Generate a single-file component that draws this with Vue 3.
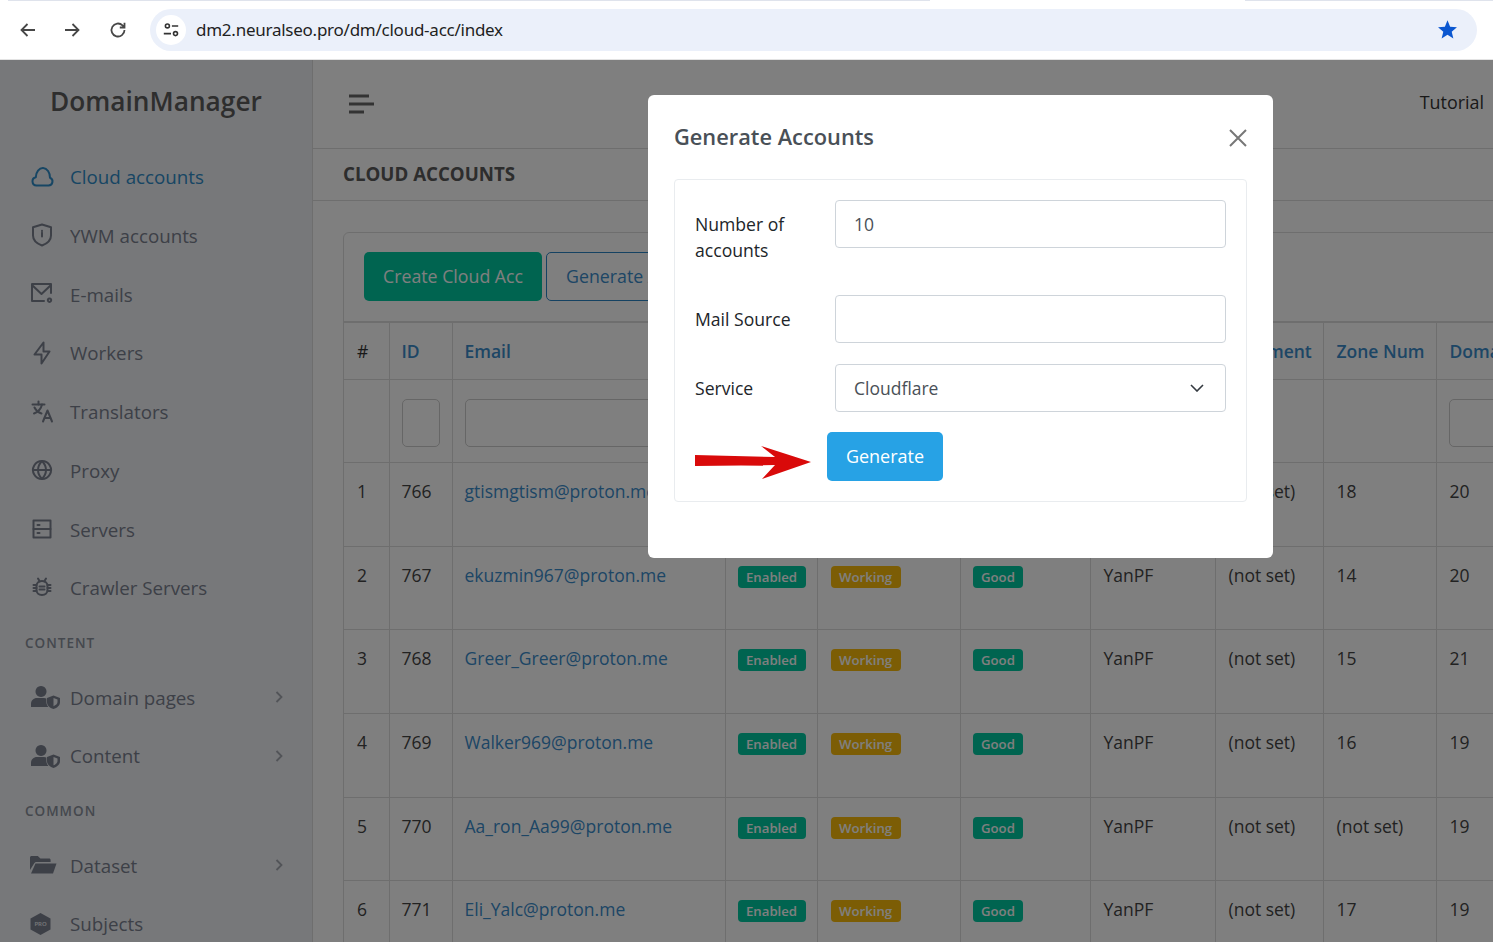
<script setup>
const userShield = ['M11 1a5.500 5.500 0 1 0 .01 0z', 'M1 22v-3c0-3.600 2.600-6 6-6h7c.9 0 1.700.2 2.400.5V17c0 1.900.8 3.600 2.100 5z', 'M23.500 10.500l6.500 2.400v4.300c0 3-2.600 5.600-6.500 6.800-3.900-1.200-6.500-3.800-6.500-6.800v-4.300zM23.500 13v8.300c2.400-1 4-2.400 4-4.200v-2.600z']

const nav = [
  { label: 'Cloud accounts', active: true, d: ['M6.500 20.500h12a4 4 0 0 0 1.500-7.700A7.100 9.500 0 0 0 5.800 12.200 4.200 4.200 0 0 0 6.500 20.500z'] },
  { label: 'YWM accounts', d: ['M12 1.500l9 2.800v8.200c0 4.600-3.600 8-9 10-5.400-2-9-5.400-9-10V4.300z', 'M12 9.500v4', 'M12 7.800v.2'] },
  { label: 'E-mails', d: ['M21 11V2H2v17h12', 'M2 3l9.500 9L21 3', 'M19.500 16.500a1.700 1.700 0 1 0 .01 0z'] },
  { label: 'Workers', d: ['M13.500 1.500v9h6l-8 12v-9H4.500z'] },
  { label: 'Translators', d: ['M2.500 4.500h12', 'M8.500 1.500v3', 'M12 4.500c-1 4.500-4 7.500-8 9', 'M4.500 7.500c1.500 3 4 5 7 6', 'M13 21.500l4.500-11 4.500 11', 'M14.800 18h5.400'] },
  { label: 'Proxy', d: ['M12 3a9 9 0 1 0 .01 0z', 'M3 12h18', 'M12 3c-2.700 2.800-4 5.800-4 9s1.300 6.200 4 9c2.700-2.800 4-5.800 4-9s-1.300-6.200-4-9z'] },
  { label: 'Servers', d: ['M3.500 3.500h17v17h-17z', 'M3.500 12h17', 'M7.500 8h2', 'M7.500 16h2'] },
  { label: 'Crawler Servers', d: ['M12 5c-3.500 0-5.500 2.200-5.500 5v4c0 2.800 2 5 5.500 5s5.500-2.200 5.500-5v-4c0-2.800-2-5-5.500-5z', 'M9.500 10.500h5', 'M9.500 13.500h5', 'M8 2.500l1.800 3', 'M16 2.500l-1.800 3', 'M3.500 9h3', 'M3.500 12h3', 'M3.500 15h3', 'M17.500 9h3', 'M17.500 12h3', 'M17.500 15h3'] },
  { section: 'CONTENT' },
  { label: 'Domain pages', more: true, solid: true, d: userShield },
  { label: 'Content', more: true, solid: true, d: userShield },
  { section: 'COMMON' },
  { label: 'Dataset', more: true, solid: true, d: ['M0 17V4.500C0 3.600.7 3 1.500 3h6.300l2.600 2.600h8.700c.9 0 1.500.6 1.500 1.500V9H6.500c-1.100 0-2 .6-2.400 1.500z', 'M5.500 10.500H26.500l-3.500 10H1z'] },
  { label: 'Subjects', hex: true, solid: true, d: ['M10.500 1l10 5.500v11l-10 5.500-10-5.500v-11z'] }
]

const rows = [
  { n: 1, id: 766, email: 'gtismgtism@proton.me', zone: '18', dom: 20 },
  { n: 2, id: 767, email: 'ekuzmin967@proton.me', zone: '14', dom: 20 },
  { n: 3, id: 768, email: 'Greer_Greer@proton.me', zone: '15', dom: 21 },
  { n: 4, id: 769, email: 'Walker969@proton.me', zone: '16', dom: 19 },
  { n: 5, id: 770, email: 'Aa_ron_Aa99@proton.me', zone: '(not set)', dom: 19 },
  { n: 6, id: 771, email: 'Eli_Yalc@proton.me', zone: '17', dom: 19 }
]
</script>

<template>
  <div class="screen">
    <header class="chrome">
      <div class="tabline"></div>
      <svg class="nav-ic" viewBox="0 0 20 20"><path d="M17 10H4M9.500 4L3.500 10l6 6" /></svg>
      <svg class="nav-ic" viewBox="0 0 20 20"><path d="M2 10h13M9.500 4l6 6-6 6" /></svg>
      <svg class="nav-ic" viewBox="0 0 20 20"><path d="M16.500 10a6.500 6.500 0 1 1-2-4.700L16.500 7.200M16.500 2.800v4.700h-4.700" /></svg>
      <div class="omnibox">
        <span class="site-btn">
          <svg viewBox="0 0 20 20"><circle cx="6" cy="5.500" r="2.200" /><path d="M11 5.500h7M2 14h8" /><circle cx="15" cy="14" r="2.200" /></svg>
        </span>
        <span class="url">dm2.neuralseo.pro/dm/cloud-acc/index</span>
        <svg class="star" viewBox="0 0 24 24"><path d="M12 1.500l3 7.300 7.800.6-6 5.100 1.900 7.700L12 18.100l-6.700 4.100 1.900-7.700-6-5.100 7.800-.6z" /></svg>
      </div>
    </header>

    <div class="app">
      <aside class="sidebar">
        <div class="brand">DomainManager</div>
        <template v-for="item in nav" :key="item.label || item.section">
          <div v-if="item.section" class="section">{{ item.section }}</div>
          <a v-else class="nav-item" :class="{ active: item.active }">
            <svg class="item-ic" :class="{ solid: item.solid }" viewBox="0 0 24 24">
              <path v-for="p in item.d" :key="p" :d="p" fill-rule="evenodd" />
              <text v-if="item.hex" class="pro" x="10.500" y="14" text-anchor="middle">PRO</text>
            </svg>
            <span class="item-label">{{ item.label }}</span>
            <svg v-if="item.more" class="more" viewBox="0 0 10 14"><path d="M2.500 2l5 5-5 5" /></svg>
          </a>
        </template>
      </aside>

      <main class="main">
        <div class="topbar">
          <svg class="burger" viewBox="0 0 26 20"><path d="M0 2h20M0 10h25M0 18h15" /></svg>
          <span class="tutorial">Tutorial</span>
        </div>
        <div class="titlebar"><h1>CLOUD ACCOUNTS</h1></div>
        <div class="content">
          <section class="card">
            <div class="toolbar">
              <button class="btn-green">Create Cloud Acc</button>
              <button class="btn-outline">Generate Accounts</button>
            </div>
            <table class="grid">
              <colgroup><col v-for="i in 10" :key="i" /></colgroup>
              <thead>
                <tr class="head">
                  <th class="plain">#</th><th>ID</th><th>Email</th><th>Status</th><th>Work Status</th>
                  <th>Quality</th><th>Owner</th><th>Comment</th><th>Zone Num</th><th>Domains</th>
                </tr>
                <tr class="filters">
                  <td></td>
                  <td><input /></td>
                  <td><input /></td>
                  <td></td><td></td><td></td><td></td><td></td><td></td>
                  <td><input /></td>
                </tr>
              </thead>
              <tbody>
                <tr v-for="r in rows" :key="r.id">
                  <td>{{ r.n }}</td>
                  <td>{{ r.id }}</td>
                  <td><a class="mail">{{ r.email }}</a></td>
                  <td><span class="badge green">Enabled</span></td>
                  <td><span class="badge amber">Working</span></td>
                  <td><span class="badge green">Good</span></td>
                  <td>YanPF</td>
                  <td>(not set)</td>
                  <td>{{ r.zone }}</td>
                  <td>{{ r.dom }}</td>
                </tr>
              </tbody>
            </table>
          </section>
        </div>
      </main>

      <div class="backdrop">
        <div class="modal">
          <div class="modal-head">
            <h2>Generate Accounts</h2>
            <svg class="close" viewBox="0 0 18 18"><path d="M1 1l16 16M17 1L1 17" /></svg>
          </div>
          <div class="form-card">
            <div class="form-row">
              <label>Number of accounts</label>
              <input class="field" value="10" />
            </div>
            <div class="form-row">
              <label>Mail Source</label>
              <input class="field" />
            </div>
            <div class="form-row">
              <label>Service</label>
              <div class="select-wrap">
                <select class="field"><option>Cloudflare</option></select>
                <svg class="caret" viewBox="0 0 14 8"><path d="M1 1l6 6 6-6" /></svg>
              </div>
            </div>
            <div class="actions">
              <svg class="arrow" viewBox="0 0 116 34"><path d="M0 10l80 2L66 1l50 16-49 17 13-14-80 1z" /></svg>
              <button class="btn-blue">Generate</button>
            </div>
          </div>
        </div>
      </div>
    </div>
  </div>
</template>

<style>
html, body { margin: 0; background: #fff; }
</style>

<style scoped>
.screen {
  width: 1493px;
  height: 942px;
  overflow: hidden;
  display: flex;
  flex-direction: column;
  font-family: "Open Sans", "Noto Sans", sans-serif;
  font-size: 17.500px;
  color: #444;
}

/* Browser chrome */
.chrome {
  position: relative;
  height: 60px;
  flex: none;
  box-sizing: border-box;
  background: #fff;
  display: flex;
  align-items: center;
  padding: 0 16px 0 18px;
  gap: 25px;
  border-bottom: 1px solid #e3e3e3;
}
.tabline {
  position: absolute;
  left: 8px;
  right: 0;
  top: 0;
  height: 1px;
  background: linear-gradient(to right, #dfe3ec 0 922px, #fff 922px 1237px, #dfe3ec 1237px);
}
.nav-ic {
  width: 20px;
  height: 20px;
  flex: none;
  fill: none;
  stroke: #474747;
  stroke-width: 1.800;
}
.omnibox {
  flex: 1;
  height: 42px;
  margin-left: -3px;
  border-radius: 21px;
  background: #ebf0fa;
  display: flex;
  align-items: center;
  padding: 0 19px 0 6px;
}
.site-btn {
  width: 30px;
  height: 30px;
  border-radius: 50%;
  background: #fff;
  display: flex;
  align-items: center;
  justify-content: center;
}
.site-btn svg {
  width: 18px;
  height: 18px;
  fill: none;
  stroke: #333;
  stroke-width: 1.800;
}
.url {
  margin-left: 10px;
  flex: 1;
  font-family: "Noto Sans", "Open Sans", sans-serif;
  font-size: 17px;
  letter-spacing: -0.250px;
  color: #1f1f1f;
}
.star {
  width: 21px;
  height: 21px;
  fill: #0b57d0;
}

/* App shell */
.app {
  position: relative;
  flex: 1;
  display: flex;
  min-height: 0;
  background: #fff;
}
.sidebar {
  width: 313px;
  flex: none;
  box-sizing: border-box;
  border-right: 1px solid #ddd;
  background: #eef0f4;
  padding-left: 30px;
  padding-right: 28px;
}
.brand {
  height: 87.300px;
  box-sizing: border-box;
  padding: 21px 0 0 20px;
  font-size: 26.250px;
  font-weight: 600;
  line-height: 40px;
  color: #5c5c5c;
  white-space: nowrap;
}
.nav-item {
  height: 58.750px;
  display: flex;
  align-items: center;
  color: #7a808f;
}
.nav-item.active { color: #2e8cc8; }
.item-ic {
  width: 24px;
  height: 24px;
  flex: none;
  overflow: visible;
  margin-right: 16px;
  fill: none;
  stroke: currentColor;
  stroke-width: 2;
  stroke-linecap: round;
  stroke-linejoin: round;
}
.item-ic.solid {
  fill: currentColor;
  stroke: none;
}
.pro {
  font-size: 6px;
  font-weight: 600;
  fill: #eef0f4;
}
.item-label {
  flex: 1;
  font-size: 18.750px;
  white-space: nowrap;
}
.more {
  width: 10px;
  height: 14px;
  fill: none;
  stroke: #a4a8b0;
  stroke-width: 1.800;
}
.section {
  height: 50.500px;
  display: flex;
  align-items: center;
  margin-left: -5px;
  font-size: 13.500px;
  font-weight: 600;
  letter-spacing: 1px;
  color: #8a909c;
}

/* Main */
.main {
  flex: 1;
  min-width: 0;
}
.topbar {
  height: 89px;
  box-sizing: border-box;
  border-bottom: 1px solid #ddd;
  display: flex;
  align-items: center;
  justify-content: space-between;
  padding: 0 9px 4px 36px;
}
.burger {
  width: 26px;
  height: 20px;
  margin-top: 4px;
  fill: none;
  stroke: #666;
  stroke-width: 3;
}
.tutorial {
  font-size: 17.900px;
  color: #333;
}
.titlebar {
  height: 52px;
  box-sizing: border-box;
  border-bottom: 1px solid #ddd;
  display: flex;
  align-items: center;
  padding: 0 0 2px 30px;
}
.titlebar h1 {
  margin: 0;
  font-size: 18.700px;
  font-weight: 700;
  color: #5a5a5a;
}
.content { padding: 31px 0 0 30px; }
.card {
  width: 1400px;
  box-sizing: border-box;
  border: 1px solid #ddd;
  border-radius: 6px;
}
.toolbar {
  display: flex;
  gap: 4px;
  padding: 19px 20px 20px;
}
.toolbar button {
  height: 49px;
  box-sizing: border-box;
  border-radius: 5px;
  font-family: inherit;
  font-size: 17.750px;
  padding: 0 19px 2px;
  white-space: nowrap;
}
.btn-green {
  background: #00c9a0;
  border: 0;
  color: #fff;
}
.btn-outline {
  background: #fff;
  border: 1px solid #2a84c4;
  color: #3a8ccb;
}

/* Table */
.grid {
  table-layout: fixed;
  width: 1400px;
  border-collapse: collapse;
  border-top: 2px solid #ddd;
}
.grid col:nth-child(1) { width: 45px; }
.grid col:nth-child(2) { width: 63px; }
.grid col:nth-child(3) { width: 273px; }
.grid col:nth-child(4) { width: 92px; }
.grid col:nth-child(5) { width: 143px; }
.grid col:nth-child(6) { width: 130px; }
.grid col:nth-child(7) { width: 125px; }
.grid col:nth-child(8) { width: 108px; }
.grid col:nth-child(9) { width: 113px; }
.grid th, .grid td {
  box-sizing: border-box;
  border: 1px solid #ddd;
  padding: 14px 12px 14px 13px;
  height: 83.700px;
  vertical-align: top;
  text-align: left;
  font-size: 17.500px;
  line-height: 28px;
  font-weight: 400;
  white-space: nowrap;
  overflow: hidden;
}
.grid tr:first-child th { border-top: 0; }
.grid th:first-child, .grid td:first-child { border-left: 0; }
.grid :is(th, td):nth-child(2),
.grid :is(th, td):nth-child(3),
.grid :is(th, td):nth-child(4),
.grid :is(th, td):nth-child(6) { padding-left: 12px; }
.grid .head th {
  height: 57px;
  font-weight: 600;
  color: #3a8ccb;
}
.grid .head th.plain { color: #333; font-weight: 400; }
.grid .filters td {
  height: 83px;
  padding: 19px 12px 15px;
}
.grid .filters input {
  display: block;
  width: 100%;
  height: 48px;
  box-sizing: border-box;
  border: 1px solid #ccc;
  border-radius: 5px;
  background: #fff;
}
.mail { color: #3a8ccb; }
.badge {
  display: inline-block;
  vertical-align: top;
  margin-top: 5px;
  height: 22px;
  padding: 0 8.500px;
  border-radius: 4px;
  font-size: 13.200px;
  font-weight: 600;
  line-height: 22px;
  color: #fff;
}
.badge.green { background: #00c9a0; }
.badge.amber { background: #f9bb0a; }

/* Modal */
.backdrop {
  position: absolute;
  inset: 0;
  background: rgba(0, 0, 0, 0.5);
  padding: 35px 0 0 648px;
}
.modal {
  width: 625px;
  height: 463px;
  box-sizing: border-box;
  background: #fff;
  border-radius: 6px;
  padding: 0 26px;
}
.modal-head {
  height: 84px;
  display: flex;
  align-items: center;
  justify-content: space-between;
  box-sizing: border-box;
}
.modal-head h2 {
  margin: 0 0 1px;
  font-size: 21.800px;
  font-weight: 600;
  color: #495057;
}
.close {
  width: 18px;
  height: 18px;
  margin-top: 2px;
  fill: none;
  stroke: #777;
  stroke-width: 2;
}
.form-card {
  width: 573px;
  height: 323px;
  box-sizing: border-box;
  border: 1px solid #e9ecef;
  border-radius: 4px;
  padding: 20px;
}
.form-row {
  display: flex;
  align-items: flex-start;
  margin-bottom: 21px;
}
.form-row label {
  width: 140px;
  flex: none;
  padding: 11px 10px 11px 0;
  box-sizing: border-box;
  font-size: 17.600px;
  line-height: 26px;
  color: #212529;
}
.field {
  width: 391px;
  height: 48px;
  box-sizing: border-box;
  border: 1px solid #ced4da;
  border-radius: 4px;
  background: #fff;
  padding: 0 18px;
  font-family: inherit;
  font-size: 17.500px;
  color: #495057;
  appearance: none;
}
.select-wrap { position: relative; }
.caret {
  position: absolute;
  right: 22px;
  top: 20px;
  width: 14px;
  height: 8px;
  fill: none;
  stroke: #343a40;
  stroke-width: 1.600;
}
.actions {
  display: flex;
  align-items: center;
  gap: 16px;
  margin-top: -1px;
}
.arrow {
  width: 116px;
  height: 34px;
  fill: #d90a0a;
  margin-top: 11px;
}
.btn-blue {
  width: 116px;
  height: 49px;
  border: 0;
  border-radius: 5px;
  background: #27a2e5;
  color: #fff;
  font-family: inherit;
  font-size: 18px;
  font-weight: 500;
  padding: 0 0 2px;
}
</style>
